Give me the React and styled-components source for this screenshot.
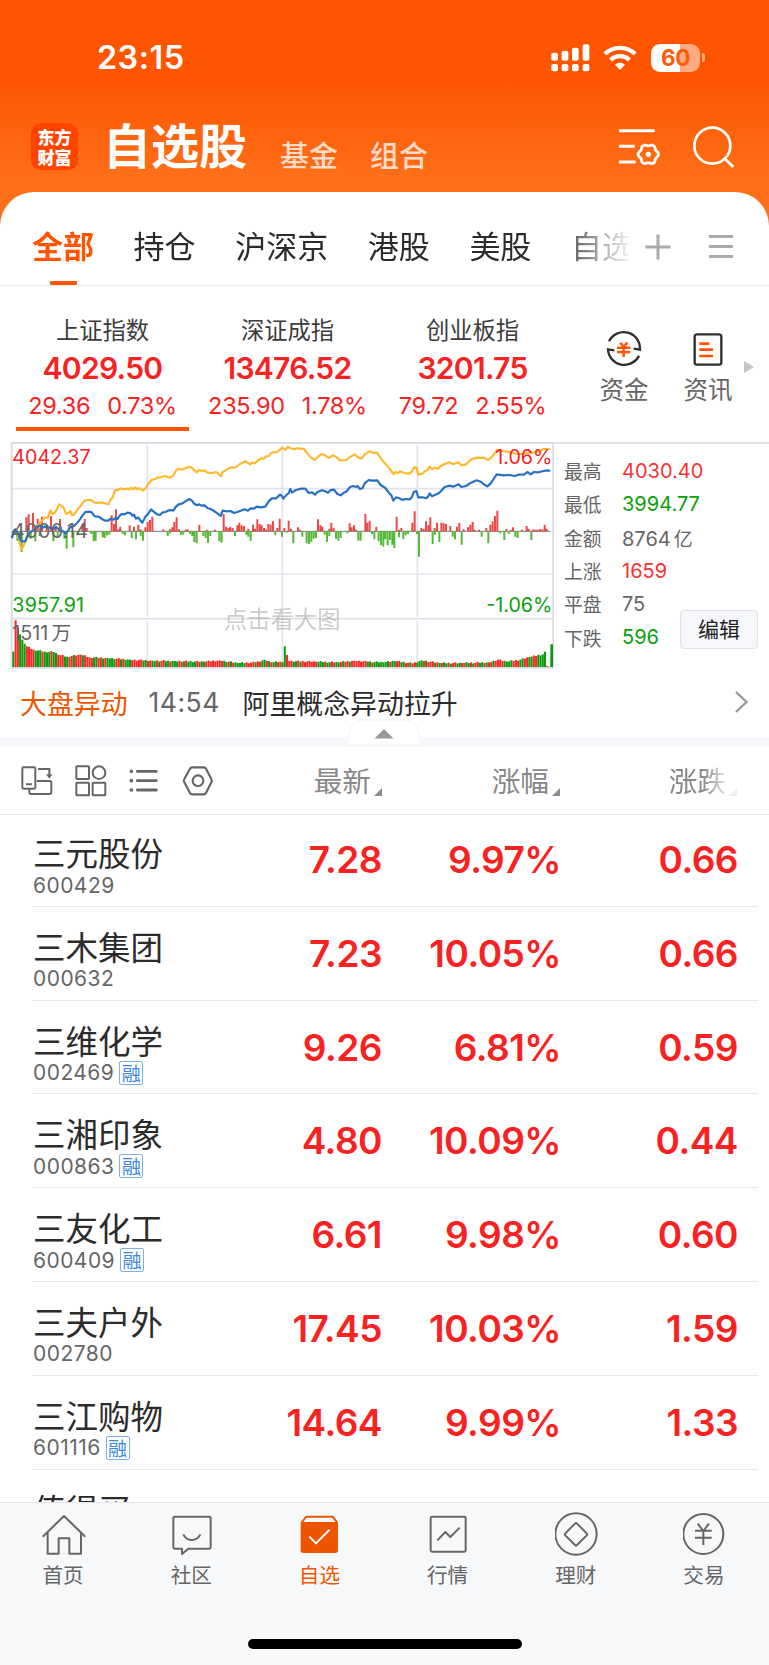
import React from "react";
import styled, { createGlobalStyle } from "styled-components";

const GlobalStyle = createGlobalStyle`
  * {
    box-sizing: border-box;
  }

  body {
    margin: 0;
    font-family: Inter, "Noto Sans CJK SC", sans-serif;
    color: #2b2b2b;
  }

  svg {
    display: block;
    flex: none;
  }
`;

const PageStyled = styled.div`
  width: 769px;
  height: 1665px;
  display: flex;
  flex-direction: column;
  overflow: hidden;
  background: linear-gradient(#ff5500 0, #ff5500 80px, #ff6f19 180px, #ff6f19 260px);
`;

const StatusBarStyled = styled.div`
  display: flex;
  align-items: center;
  height: 115px;
  padding: 0 64px 0 97px;
  color: #fff;

  .time {
    flex: 1;
    font-size: 32.3px;
    font-weight: 600;
    letter-spacing: 0.5px;
    line-height: 40px;
  }
`;

const BatteryStyled = styled.div`
  display: flex;
  align-items: center;
  gap: 2px;
  margin-left: 14px;

  .level {
    width: 49px;
    height: 28px;
    border-radius: 9px;
    background: linear-gradient(90deg, #fff 60%, #ffaa80 60%);
    color: #ff5c0a;
    font-size: 22.5px;
    font-weight: 700;
    line-height: 28px;
    text-align: center;
    letter-spacing: -0.5px;
  }

  .nub {
    width: 3px;
    height: 9px;
    border-radius: 0 4px 4px 0;
    background: #ffaa80;
  }
`;

const TitleBarStyled = styled.div`
  display: flex;
  align-items: flex-end;
  height: 77px;
  padding: 0 33px 22px 31px;
`;

const LogoStyled = styled.div`
  display: flex;
  flex-direction: column;
  align-items: center;
  width: 47px;
  height: 47px;
  padding-top: 4px;
  border-radius: 10px;
  background: #ff4400;
  color: #fff;
  font-family: "Noto Sans CJK SC", sans-serif;
  font-size: 17px;
  font-weight: 900;
  line-height: 19.5px;
`;

const TitleStyled = styled.h1`
  flex: none;
  margin: 0 0 0 25px;
  color: #fff;
  font-size: 48px;
  font-weight: 700;
  line-height: 46px;
`;

const SubTitleStyled = styled.span`
  margin-left: ${(props) => props.$gap}px;
  color: #ffdcc8;
  font-size: 29px;
  font-weight: 500;
  line-height: 26px;
`;

const HeaderIconsStyled = styled.div`
  display: flex;
  flex: 1;
  justify-content: flex-end;
  align-items: center;
  gap: 32px;
  margin-bottom: 2px;
`;

const SheetStyled = styled.main`
  display: flex;
  flex-direction: column;
  flex: 1;
  min-height: 0;
  border-radius: 34px 34px 0 0;
  background: #fff;
`;

const TabsStyled = styled.div`
  display: flex;
  flex: none;
  height: 94px;
  padding-left: 32px;
  border-bottom: 1px solid #ececec;
`;

const TabListStyled = styled.div`
  display: flex;
  gap: 39.6px;
  width: 596px;
  overflow: hidden;
  mask-image: linear-gradient(90deg, #000 520px, transparent 602px);
`;

const TabStyled = styled.div`
  display: flex;
  flex-direction: column;
  align-items: center;
  justify-content: space-between;
  flex: none;
  padding-top: 34px;
  color: ${(props) => (props.$active ? "#ff5500" : "#2b2b2b")};
  font-size: 31px;
  font-weight: ${(props) => (props.$active ? 700 : 400)};
  line-height: 42px;

  &::after {
    content: "";
    width: 27px;
    height: 4px;
    border-radius: 1px;
    background: ${(props) => (props.$active ? "#ff5500" : "transparent")};
  }
`;

const TabActionsStyled = styled.div`
  display: flex;
  gap: 38px;
  padding: 42px 0 0 17px;
`;

const IndicesStyled = styled.div`
  display: flex;
  flex: none;
  height: 156px;
  padding: 27px 15px 0 10px;
`;

const IndexStyled = styled.div`
  width: 185px;
  height: 120px;
  text-align: center;

  .name {
    color: #3c3c3c;
    font-size: 23.3px;
    line-height: 36px;
  }

  .value {
    color: #f82222;
    font-size: 30px;
    font-weight: 600;
    letter-spacing: -0.7px;
    line-height: 38px;
  }

  .change {
    display: flex;
    justify-content: center;
    gap: 17px;
    color: #f82222;
    font-size: 23.5px;
    letter-spacing: -0.3px;
    line-height: 37px;
  }

  .bar {
    height: 4px;
    margin: 3px 6px 0;
    background: ${(props) => (props.$active ? "#ff5500" : "transparent")};
  }
`;

const ShortcutStyled = styled.div`
  display: flex;
  flex-direction: column;
  align-items: center;
  width: 84px;
  padding-top: 17px;
  color: #666;
  font-size: 24.5px;
  line-height: 36px;

  svg {
    margin-bottom: 4px;
  }
`;

const MarketStyled = styled.div`
  display: flex;
  flex: none;
  height: 228px;
  margin-left: 10px;
`;

const StatsStyled = styled.div`
  position: relative;
  flex: 1;
  padding: 10px 0 0 10px;
  border-top: 2px solid #dfe1e8;
`;

const StatStyled = styled.div`
  display: flex;
  height: 33.3px;
  align-items: center;
  font-size: 20px;

  .label {
    width: 58px;
    color: #666;
    font-size: 18.8px;
  }

  .value {
    color: ${(props) => props.$color};
  }

  .unit {
    margin-left: 3px;
    font-size: 19px;
  }
`;

const EditButtonStyled = styled.button`
  position: absolute;
  right: 11px;
  top: 166px;
  width: 78px;
  height: 39px;
  padding: 0 0 4px;
  border: 1px solid #dfe2e8;
  border-radius: 4px;
  background: #f6f7fa;
  color: #222;
  font-family: "Noto Sans CJK SC", sans-serif;
  font-size: 21px;
`;

const NewsStyled = styled.div`
  display: flex;
  align-items: center;
  flex: none;
  height: 67px;
  padding: 0 21px 3px 20px;
  font-size: 26.9px;

  .tag {
    color: #ee5500;
  }

  .time {
    width: 96px;
    padding-left: 21px;
    color: #666;
    font-size: 26.5px;
    letter-spacing: 0.5px;
  }

  .text {
    flex: 1;
    padding: 1px 0 0 19px;
  }
`;

const DividerStyled = styled.div`
  position: relative;
  flex: none;
  height: 10px;
  background: #f6f7fa;

  svg {
    position: absolute;
    left: 346px;
    top: -18px;
  }
`;

const TableHeadStyled = styled.div`
  display: grid;
  grid-template-columns: 1fr 150px 178px 177px;
  flex: none;
  height: 68px;
  padding: 0 32px 0 21px;
  align-items: center;
  border-bottom: 1px solid #e9e9ec;
`;

const ToolsStyled = styled.div`
  display: flex;
  gap: 21.7px;
  padding-top: 1px;
`;

const ColumnStyled = styled.div`
  display: flex;
  justify-content: flex-end;
  align-items: flex-end;
  gap: 3px;
  padding-top: 2px;
  color: #888;
  font-size: 28.7px;
  line-height: 42px;
  ${(props) => props.$faded && "mask-image: linear-gradient(90deg, #000 142px, rgba(0, 0, 0, 0.15) 169px);"}

  svg {
    margin-bottom: 7px;
  }
`;

const ListStyled = styled.div`
  flex: 1;
  min-height: 0;
  margin: -2px 11px 0 32px;
  overflow: hidden;
`;

const RowStyled = styled.div`
  display: grid;
  grid-template-columns: 1fr 178px 179px 177px;
  height: 93.8px;
  padding-right: 20px;
  border-bottom: 1px solid #e9e9ec;
`;

const StockStyled = styled.div`
  padding: 21px 0 0 1px;

  .name {
    font-size: 32.5px;
    line-height: 42px;
    white-space: nowrap;
  }

  .code {
    display: flex;
    align-items: center;
    gap: 5px;
    height: 24px;
    margin-top: -3px;
    color: #666;
    font-size: 21px;
    letter-spacing: 0.45px;
  }
`;

const MarginTagStyled = styled.span`
  width: 24px;
  height: 24px;
  border: 1.5px solid #7fb0ec;
  border-radius: 2px;
  color: #3d86dc;
  font-family: "Noto Sans CJK SC", sans-serif;
  font-size: 19px;
  letter-spacing: 0;
  line-height: 21px;
  text-align: center;
`;

const FigureStyled = styled.div`
  padding-top: 24px;
  color: #f82222;
  font-size: 37px;
  font-weight: 600;
  letter-spacing: -0.5px;
  line-height: 46px;
  text-align: right;
`;

const NavStyled = styled.nav`
  display: grid;
  grid-template-columns: repeat(6, 1fr);
  grid-template-rows: 1fr auto;
  flex: none;
  height: 163px;
  border-top: 1px solid #e6e7eb;
  background: #f7f8fa;
`;

const NavItemStyled = styled.div`
  display: flex;
  flex-direction: column;
  align-items: center;
  padding-top: 9px;
  color: ${(props) => (props.$active ? "#ee5500" : "#666")};
  font-size: 20.6px;
  line-height: 34px;

  svg {
    margin-bottom: 3px;
  }

  span {
    margin-right: 2px;
  }
`;

const HomeIndicatorStyled = styled.div`
  grid-column: 1 / -1;
  justify-self: center;
  width: 274px;
  height: 10px;
  margin-bottom: 16px;
  border-radius: 5px;
  background: #000;
`;

const SPREAD = {
  yellow:
    "36,322 44,298 54,316 64,358 72,345 80,322 92,308 104,296 116,282 126,272 134,263 144,262 151,241 157,252 166,246 171,237 177,223 186,229 191,233 198,252 204,249 211,243 216,256 222,254 228,246 234,237 240,230 247,220 254,212 263,210 272,210 284,218 292,219 304,217 312,219 325,223 332,208 338,203 345,181 356,179 362,175 372,178 380,176 388,178 393,173 398,178 405,172 412,178 418,174 428,182 436,176 444,162 456,149 466,147 472,143 484,141 495,138 503,142 513,142 520,136 528,122 536,116 546,119 556,115 568,110 576,114 584,122 590,127 597,120 606,123 614,121 622,128 636,129 648,126 656,132 663,139 668,126 680,119 692,112 702,113 708,111 720,102 737,94 750,103 757,98 764,100 772,93 783,85 790,87 797,80 806,78 812,71 818,67 832,66 841,58 846,53 856,59 864,50 870,54 882,58 892,55 902,56 912,57 922,70 932,82 944,90 954,80 966,72 976,76 986,84 992,80 1000,76 1010,82 1020,91 1040,90 1048,82 1064,73 1076,83 1086,86 1094,73 1104,67 1110,64 1120,69 1130,67 1138,78 1146,90 1156,101 1168,115 1181,133 1186,126 1194,129 1200,124 1216,130 1230,130 1236,124 1242,112 1249,113 1255,134 1268,131 1274,124 1284,118 1288,110 1296,118 1304,113 1314,116 1324,107 1334,102 1348,97 1360,103 1375,97 1384,106 1396,104 1404,98 1414,88 1430,83 1444,84 1452,83 1464,90 1476,80 1484,70 1492,59 1506,63 1530,66 1540,70 1560,72 1580,70 1600,68 1620,62 1632,57 1650,57",
  blue:
    "36,325 40,305 46,298 52,308 56,314 60,328 68,334 76,334 82,318 92,306 102,300 112,290 120,286 128,293 136,289 144,294 152,292 160,298 168,290 178,300 188,303 197,311 204,302 210,292 222,288 232,278 240,268 248,256 256,246 266,245 274,246 284,259 296,260 306,267 316,272 325,272 332,266 340,269 346,264 352,267 360,256 366,252 374,253 382,248 392,250 397,257 402,254 408,266 414,262 420,270 427,278 436,260 444,252 453,238 460,244 466,249 472,253 480,255 488,247 496,246 504,242 512,240 520,242 528,230 536,223 546,221 556,214 568,207 576,212 582,221 592,226 598,223 604,227 614,226 622,234 632,237 642,243 652,250 662,258 668,242 680,244 692,243 702,249 712,246 722,242 734,238 744,242 752,235 762,236 770,230 782,232 796,230 806,214 816,205 828,205 840,194 846,198 850,206 860,194 866,190 871,177 876,188 888,180 904,176 916,176 926,189 936,187 945,194 952,186 966,181 974,183 984,188 992,180 1002,179 1012,192 1022,196 1032,188 1040,184 1050,171 1060,168 1068,171 1072,168 1080,177 1088,174 1094,160 1106,150 1116,152 1132,151 1142,165 1156,174 1168,190 1174,196 1180,212 1188,202 1198,205 1208,210 1216,207 1230,208 1236,200 1242,185 1249,183 1255,202 1268,202 1278,205 1284,200 1289,190 1296,199 1306,194 1316,190 1324,182 1334,171 1348,167 1360,170 1376,163 1384,171 1398,168 1410,160 1420,155 1430,151 1442,155 1450,162 1462,169 1472,160 1480,148 1490,133 1510,136 1530,135 1544,138 1556,134 1572,134 1582,126 1592,133 1602,126 1616,127 1630,123 1644,121 1650,124",
};

// x, height pairs above and below the zero line
const RISES = [
  79,42, 86,51, 99,55, 113,38, 126,44, 140,12, 153,46, 167,12, 180,37, 247,20, 254,37, 260,10, 335,48, 342,22, 348,66, 355,6, 361,14, 389,18, 402,14, 415,20, 422,6,
  436,12, 443,28, 450,34, 457,44, 490,6, 510,6, 517,12, 523,28, 530,42, 537,6, 557,5, 563,6, 598,20, 620,5, 645,5, 671,52, 678,14, 685,10, 691,14, 698,10, 712,18,
  718,26, 725,18, 732,16, 745,8, 759,20, 765,8, 772,36, 779,22, 785,18, 792,10, 798,5, 805,22, 812,20, 819,30, 832,10, 839,38, 853,10, 866,32, 873,8, 894,12, 900,5,
  954,36, 961,18, 967,14, 988,8, 994,26, 1001,10, 1049,24, 1055,12, 1062,18, 1068,5, 1096,52, 1102,26, 1109,32, 1129,14, 1190,44, 1197,5, 1204,10, 1237,26, 1244,60,
  1264,10, 1271,8, 1278,30, 1285,18, 1291,42, 1304,10, 1311,26, 1324,26, 1331,24, 1338,22, 1351,16, 1371,14, 1378,26, 1391,6, 1404,12, 1411,20, 1418,28, 1424,5,
  1437,5, 1459,10, 1471,20, 1478,30, 1485,46, 1492,62, 1519,6, 1532,5, 1539,12, 1566,5, 1580,16, 1586,8, 1600,6, 1607,5, 1613,5, 1620,6, 1627,6, 1634,20, 1640,8,
];
const FALLS = [
  52,28, 59,36, 65,62, 92,22, 106,30, 119,14, 160,30, 173,18, 193,22, 200,52, 220,48, 233,12, 274,8, 281,30, 287,28, 308,18, 314,20, 321,12, 328,10, 368,8, 375,12,
  395,20, 408,24, 422,14, 429,28, 503,14, 510,6, 543,10, 550,10, 570,8, 577,14, 583,32, 590,36, 610,14, 617,20, 624,34, 631,14, 658,30, 665,34, 705,14, 739,10,
  745,16, 752,28, 826,12, 846,16, 860,4, 880,36, 907,16, 920,36, 927,38, 934,32, 941,22, 948,20, 974,10, 981,32, 988,14, 1008,22, 1015,28, 1022,20, 1042,6, 1075,28,
  1082,28, 1116,8, 1123,24, 1136,30, 1143,42, 1150,46, 1156,24, 1163,42, 1170,26, 1177,40, 1183,50, 1197,18, 1210,24, 1217,12, 1224,8, 1251,8, 1257,76, 1298,38,
  1305,10, 1318,32, 1358,16, 1365,24, 1385,40, 1445,16, 1465,36, 1500,6, 1513,26, 1526,8, 1546,16, 1553,20, 1594,26,
];

const VOLUME_SHAPE = [
  [0, 46], [1, 140], [2, 118], [3, 98], [4, 82], [5, 70], [6, 62], [9, 52], [14, 46], [18, 45], [20, 37], [24, 31], [30, 37], [34, 29], [42, 27], [52, 22], [62, 19],
  [72, 18], [85, 16], [92, 20], [100, 12], [108, 14], [112, 22], [115, 14], [119, 16], [120, 14], [121, 62], [122, 36], [123, 18], [135, 16], [145, 14], [152, 19], [158, 16], [165, 14],
  [170, 18], [178, 11], [182, 20], [190, 12], [200, 12], [212, 14], [216, 22], [220, 16], [226, 22], [230, 30], [236, 38], [237, 46], [238, 3],
];
const VOLUME_COLORS =
  "grrgggrrrrgggrgggrggrrrggrrgrrrgrrrrggrrgrggggrrgrgggrrrrrggrrggrgrrggrgggrrgrggggrrggrrrrrrrrggrgrgggggrrrrgrrggrgrggrrgrrrrggrgrrrrrrrgggrggrrggrgrrgrrrrrrrggrgggggggrggrrggrrgrrgggrgrrrgrgrggrgrrggrrggrgrrggrgrrgrrrrggggrrrggrrggrrggggrr";

const volumeAt = (i) => {
  const next = VOLUME_SHAPE.findIndex((p) => p[0] >= i);
  const [x1, y1] = VOLUME_SHAPE[next];
  if (x1 === i) return y1;
  const [x0, y0] = VOLUME_SHAPE[next - 1];
  return y0 + ((y1 - y0) * (i - x0)) / (x1 - x0) + ((i * 7) % 5) - 2;
};

const bars = (pairs, up) => {
  let d = "";
  for (let i = 0; i < pairs.length; i += 2) {
    d += `M${pairs[i]} 304V${up ? 304 - pairs[i + 1] : 304 + pairs[i + 1]}`;
  }
  return d;
};

function MarketChart() {
  return (
    <svg width="544" height="227" viewBox="30 36 1632 681" fontFamily='Inter, "Noto Sans CJK SC", sans-serif' fontSize="59">
      <path d="M34 176H1660M34 432H1660M442 46V560M442 572V711M847 46V711M1252 46V560M1252 572V711" stroke="#e1e4ec" strokeWidth="5" fill="none" />
      <path d="M34 566H1660" stroke="#dddfe6" strokeWidth="5" />
      <path d="M1662 39H35V713H1660V39" stroke="#d9dce3" strokeWidth="6" fill="none" />
      <path d="M36 304H1652" stroke="#777" strokeWidth="3" />
      <path d={bars(RISES, true)} stroke="#ea4a4a" strokeWidth="6" />
      <path d={bars(FALLS, false)} stroke="#55b836" strokeWidth="6" />
      {VOLUME_COLORS.slice(0, 239).split("").map((c, i) => (
        <rect key={i} x={37 + i * 6.73} y={711 - volumeAt(i)} width="6.2" height={volumeAt(i)} fill={c === "r" && i !== 121 ? "#fa2828" : "#0c9c0c"} />
      ))}
      <rect x="1651" y="643" width="8" height="68" fill="#0c9c0c" />
      <polyline points={SPREAD.yellow} fill="none" stroke="#ffb92e" strokeWidth="6.5" strokeLinejoin="round" />
      <polyline points={SPREAD.blue} fill="none" stroke="#2870c4" strokeWidth="6.5" strokeLinejoin="round" />
      <text x="37" y="323" fill="#666" letterSpacing="0.8">4000.14</text>
      <text x="37" y="101" fill="#f82222">4042.37</text>
      <text x="37" y="546" fill="#0aa00a" letterSpacing="0.5">3957.91</text>
      <text x="37" y="630" fill="#666">1511<tspan dx="10">万</tspan></text>
      <text x="1657" y="101" fill="#f82222" textAnchor="end">1.06%</text>
      <text x="1657" y="546" fill="#0aa00a" textAnchor="end">-1.06%</text>
      <text x="672" y="594" fill="#aaa" opacity="0.6" fontSize="70">点击看大图</text>
    </svg>
  );
}

const gearPath = () => {
  const points = [];
  for (let a = 0; a < 360; a += 6) {
    const t = (a * Math.PI) / 180;
    const r = 28 + 2.6 * Math.cos(6 * t);
    points.push(`${(91 + r * Math.cos(t)).toFixed(1)} ${(79 + r * Math.sin(t)).toFixed(1)}`);
  }
  return `M${points.join("L")}Z`;
};

const SignalIcon = () => (
  <svg width="39" height="28" viewBox="497 130 117 84" fill="#fff">
    {[[498, 156], [529, 150], [560, 141], [592, 131]].map(([x, y]) => (
      <React.Fragment key={x}>
        <rect x={x} y={y} width="20" height={180 - y} rx="6" />
        <rect x={x} y="190" width="20" height="22" rx="6" />
      </React.Fragment>
    ))}
  </svg>
);

const WifiIcon = () => (
  <svg width="34" height="26" viewBox="653 132 102 78" fill="none" stroke="#fff" strokeWidth="13" style={{ marginLeft: 13 }}>
    <path d="M659 159A64.5 64.5 0 0 1 749 159" />
    <path d="M676 177A40 40 0 0 1 732 177" />
    <path d="M704 207L689 191A22 22 0 0 1 719 191Z" fill="#fff" stroke="none" />
  </svg>
);

const FilterIcon = () => (
  <svg width="42" height="38" viewBox="0 0 126 114" fill="none" stroke="#fff" strokeWidth="9">
    <path d="M3 8H110M3 55H50M3 102H53" />
    <path d={gearPath()} strokeWidth="8.5" strokeLinejoin="round" />
    <circle cx="91" cy="79" r="8" fill="#fff" stroke="none" />
  </svg>
);

const SearchIcon = () => (
  <svg width="44" height="42" viewBox="921 375 132 126" fill="none" stroke="#fff" strokeWidth="8">
    <circle cx="982" cy="434" r="54" />
    <path d="M1018 472L1045 498" />
  </svg>
);

const FundIcon = () => (
  <svg width="38" height="38" viewBox="661 419 114 114" fill="none" stroke="#2f2f2f" strokeWidth="7">
    <path d="M673 453A49 49 0 0 1 766 478L747 475" />
    <path d="M763 496A49 49 0 0 1 670 477L689 480" />
    <path d="M707 457L717 470L728 457M697 472H737M697 485H737M717 470V500" stroke="#ff5500" strokeWidth="7.5" />
  </svg>
);

const ArticleIcon = () => (
  <svg width="38" height="38" viewBox="913 419 114 114" fill="none" stroke="#2f2f2f" strokeWidth="7">
    <rect x="930" y="432" width="80" height="91" rx="7" />
    <path d="M944 460H974M944 478H985M944 497H985" stroke="#ff5500" strokeWidth="8" />
  </svg>
);

const SwapIcon = () => (
  <svg width="32" height="32" viewBox="63 285 96 96" fill="none" stroke="#666" strokeWidth="6">
    <rect x="67" y="292" width="39" height="64" rx="4" />
    <path d="M78 343H96M114 297H148V314M88 358V367Q88 372 93 372H149Q154 372 154 367V338Q154 333 149 333H110" />
    <path d="M138 313H157L148 326Z" fill="#666" stroke="none" />
  </svg>
);

const GridIcon = () => (
  <svg width="32" height="32" viewBox="224 285 96 96" fill="none" stroke="#666" strokeWidth="6">
    <rect x="228" y="289" width="38" height="38" rx="2" />
    <circle cx="296" cy="308" r="19" />
    <rect x="228" y="338" width="38" height="38" rx="2" />
    <rect x="277" y="338" width="38" height="38" rx="2" />
  </svg>
);

const ListIcon = () => (
  <svg width="32" height="32" viewBox="386 285 96 96" stroke="#666" strokeWidth="8.5" strokeLinecap="round">
    <path d="M414 304H471M414 332H471M414 360H471" />
    <path d="M396 304h.1M396 332h.1M396 360h.1" strokeWidth="11" />
  </svg>
);

const HexIcon = () => (
  <svg width="32" height="32" viewBox="547 285 96 96" fill="none" stroke="#666" strokeWidth="6.5" strokeLinejoin="round">
    <path d="M554 337Q551 332 554 327L571 296Q573 292 578 292H612Q617 292 619 296L635 327Q638 332 635 337L619 369Q617 373 612 373H578Q573 373 571 369Z" />
    <circle cx="595" cy="332" r="16" />
  </svg>
);

const SortMark = () => (
  <svg width="8" height="8" viewBox="0 0 8 8">
    <path d="M8 0V8H0Z" fill="#888a94" />
  </svg>
);

const NAV_ITEMS = [
  {
    label: "首页",
    box: "127 215 132 132",
    icon: <path d="M129 289L193 227L257 289M144 276V340H177V294H209V340H244V276" />,
  },
  {
    label: "社区",
    box: "511 215 132 132",
    icon: <path d="M526 229H628Q633 229 633 234V320Q633 325 628 325H566L547 341V325H526Q521 325 521 320V234Q521 229 526 229ZM551 282Q558 298 576 299Q595 298 602 282" />,
  },
  {
    label: "自选",
    box: "896 215 132 132",
    active: true,
    icon: (
      <>
        <path d="M907 246L921 229H1000L1013 246" />
        <path d="M904 245H1016V330Q1016 338 1008 338H912Q904 338 904 330Z" fill="currentColor" stroke="none" />
        <path d="M930 289L950 309L991 268" stroke="#fff" />
      </>
    ),
  },
  {
    label: "行情",
    box: "126 215 132 132",
    icon: (
      <>
        <rect x="137" y="229" width="105" height="105" rx="4" />
        <path d="M157 300L181 275L196 290L224 262" />
      </>
    ),
  },
  {
    label: "理财",
    box: "510 215 132 132",
    icon: (
      <>
        <circle cx="573" cy="281" r="62" />
        <path d="M570 250Q573 247 576 250L605 279Q608 282 605 285L576 314Q573 317 570 314L541 285Q538 282 541 279Z" />
      </>
    ),
  },
  {
    label: "交易",
    box: "895 215 132 132",
    icon: (
      <>
        <circle cx="956" cy="281" r="60" />
        <path d="M939 250L956 272L973 250M931 271H981M931 292H981M956 271V314" />
      </>
    ),
  },
];

const TABS = ["全部", "持仓", "沪深京", "港股", "美股", "自选"];

const INDICES = [
  { name: "上证指数", value: "4029.50", diff: "29.36", percent: "0.73%" },
  { name: "深证成指", value: "13476.52", diff: "235.90", percent: "1.78%" },
  { name: "创业板指", value: "3201.75", diff: "79.72", percent: "2.55%" },
];

const STATS = [
  { label: "最高", value: "4030.40", color: "#f83232" },
  { label: "最低", value: "3994.77", color: "#0aa00a" },
  { label: "金额", value: "8764", unit: "亿", color: "#666" },
  { label: "上涨", value: "1659", color: "#f83232" },
  { label: "平盘", value: "75", color: "#666" },
  { label: "下跌", value: "596", color: "#0aa00a" },
];

const STOCKS = [
  { name: "三元股份", code: "600429", price: "7.28", percent: "9.97%", diff: "0.66" },
  { name: "三木集团", code: "000632", price: "7.23", percent: "10.05%", diff: "0.66" },
  { name: "三维化学", code: "002469", margin: true, price: "9.26", percent: "6.81%", diff: "0.59" },
  { name: "三湘印象", code: "000863", margin: true, price: "4.80", percent: "10.09%", diff: "0.44" },
  { name: "三友化工", code: "600409", margin: true, price: "6.61", percent: "9.98%", diff: "0.60" },
  { name: "三夫户外", code: "002780", price: "17.45", percent: "10.03%", diff: "1.59" },
  { name: "三江购物", code: "601116", margin: true, price: "14.64", percent: "9.99%", diff: "1.33" },
  { name: "值得买" },
];

export default function App() {
  return (
    <PageStyled>
      <GlobalStyle />
      <StatusBarStyled>
        <span className="time">23:15</span>
        <SignalIcon />
        <WifiIcon />
        <BatteryStyled>
          <div className="level">60</div>
          <div className="nub" />
        </BatteryStyled>
      </StatusBarStyled>
      <TitleBarStyled>
        <LogoStyled>
          <span>东方</span>
          <span>财富</span>
        </LogoStyled>
        <TitleStyled>自选股</TitleStyled>
        <SubTitleStyled $gap={33}>基金</SubTitleStyled>
        <SubTitleStyled $gap={32}>组合</SubTitleStyled>
        <HeaderIconsStyled>
          <FilterIcon />
          <SearchIcon />
        </HeaderIconsStyled>
      </TitleBarStyled>

      <SheetStyled>
        <TabsStyled>
          <TabListStyled>
            {TABS.map((tab, i) => (
              <TabStyled key={tab} $active={i === 0}>
                {tab}
              </TabStyled>
            ))}
          </TabListStyled>
          <TabActionsStyled>
            <svg width="26" height="26" viewBox="0 0 26 26" stroke="#aaa" strokeWidth="3">
              <path d="M0.5 13H25.5M13 0.5V25.5" />
            </svg>
            <svg width="24" height="26" viewBox="0 0 24 26" stroke="#aaa" strokeWidth="3">
              <path d="M0 2.5H24M0 12.5H24M0 22.5H24" />
            </svg>
          </TabActionsStyled>
        </TabsStyled>

        <IndicesStyled>
          {INDICES.map((item, i) => (
            <IndexStyled key={item.name} $active={i === 0}>
              <div className="name">{item.name}</div>
              <div className="value">{item.value}</div>
              <div className="change">
                <span>{item.diff}</span>
                <span>{item.percent}</span>
              </div>
              <div className="bar" />
            </IndexStyled>
          ))}
          <ShortcutStyled style={{ marginLeft: 17 }}>
            <FundIcon />
            资金
          </ShortcutStyled>
          <ShortcutStyled>
            <ArticleIcon />
            资讯
          </ShortcutStyled>
          <svg width="10" height="12" viewBox="0 0 10 12" style={{ margin: "48px 0 0 -6px" }}>
            <path d="M0 0L10 6L0 12Z" fill="#c4c4c4" />
          </svg>
        </IndicesStyled>

        <MarketStyled>
          <MarketChart />
          <StatsStyled>
            {STATS.map((stat) => (
              <StatStyled key={stat.label} $color={stat.color}>
                <span className="label">{stat.label}</span>
                <span className="value">
                  {stat.value}
                  {stat.unit && <span className="unit">{stat.unit}</span>}
                </span>
              </StatStyled>
            ))}
            <EditButtonStyled>编辑</EditButtonStyled>
          </StatsStyled>
        </MarketStyled>

        <NewsStyled>
          <span className="tag">大盘异动</span>
          <span className="time">14:54</span>
          <span className="text">阿里概念异动拉升</span>
          <svg width="13" height="22" viewBox="0 0 13 22" fill="none" stroke="#999" strokeWidth="2.4">
            <path d="M1 1L11.5 11L1 21" />
          </svg>
        </NewsStyled>
        <DividerStyled>
          <svg width="76" height="28" viewBox="0 0 76 28">
            <path d="M1 26C4 10 5 1 17 1H59C71 1 72 10 75 26Z" fill="#fff" stroke="#f0f1f4" />
            <path d="M38 10L47.5 19.5H28.5Z" fill="#999" />
          </svg>
        </DividerStyled>

        <TableHeadStyled>
          <ToolsStyled>
            <SwapIcon />
            <GridIcon />
            <ListIcon />
            <HexIcon />
          </ToolsStyled>
          <ColumnStyled>最新<SortMark /></ColumnStyled>
          <ColumnStyled>涨幅<SortMark /></ColumnStyled>
          <ColumnStyled $faded>涨跌<SortMark /></ColumnStyled>
        </TableHeadStyled>

        <ListStyled>
          {STOCKS.map((stock) => (
            <RowStyled key={stock.name}>
              <StockStyled>
                <div className="name">{stock.name}</div>
                <div className="code">
                  {stock.code}
                  {stock.margin && <MarginTagStyled>融</MarginTagStyled>}
                </div>
              </StockStyled>
              <FigureStyled>{stock.price}</FigureStyled>
              <FigureStyled>{stock.percent}</FigureStyled>
              <FigureStyled>{stock.diff}</FigureStyled>
            </RowStyled>
          ))}
        </ListStyled>

        <NavStyled>
          {NAV_ITEMS.map((item) => (
            <NavItemStyled key={item.label} $active={item.active}>
              <svg width="44" height="44" viewBox={item.box} fill="none" stroke="currentColor" strokeWidth="6" strokeLinejoin="round">
                {item.icon}
              </svg>
              <span>{item.label}</span>
            </NavItemStyled>
          ))}
          <HomeIndicatorStyled />
        </NavStyled>
      </SheetStyled>
    </PageStyled>
  );
}
